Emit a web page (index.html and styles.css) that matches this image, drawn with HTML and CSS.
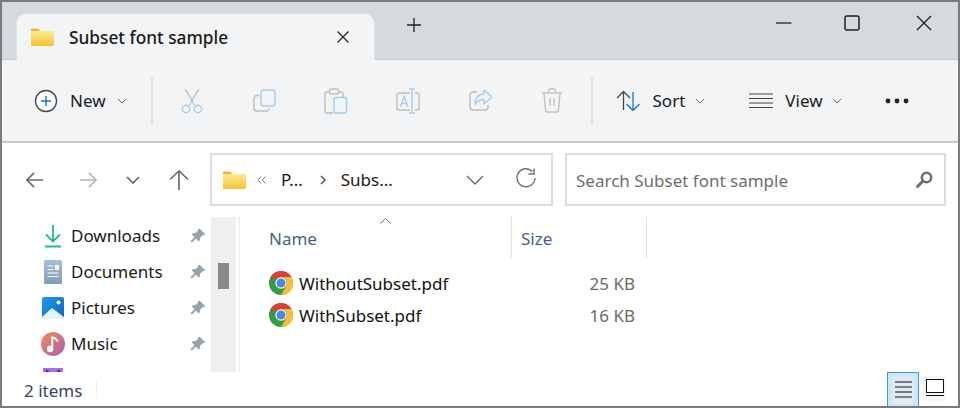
FILE: index.html
```html
<!DOCTYPE html>
<html lang="en">
<head>
    <meta charset="UTF-8">
    <title>Subset font sample</title>
    <link rel="stylesheet" href="styles.css">
</head>
<body>
    <svg class="defs" width="0" height="0">
        <defs>
            <linearGradient id="folder-grad" x1="0" y1="0" x2="0" y2="1">
                <stop offset="0" stop-color="#ffe991"/>
                <stop offset="1" stop-color="#f6c234"/>
            </linearGradient>
            <linearGradient id="doc-grad" x1="0" y1="0" x2="0" y2="1">
                <stop offset="0" stop-color="#a9bdd6"/>
                <stop offset="1" stop-color="#7f9cbd"/>
            </linearGradient>
            <linearGradient id="pic-grad" x1="0" y1="0" x2="1" y2="1">
                <stop offset="0" stop-color="#1f9bec"/>
                <stop offset="1" stop-color="#0a64c4"/>
            </linearGradient>
            <linearGradient id="music-grad" x1="0" y1="0" x2="1" y2="1">
                <stop offset="0" stop-color="#f0904e"/>
                <stop offset="1" stop-color="#a85fb4"/>
            </linearGradient>
            <symbol id="folder" viewBox="0 0 24 18">
                <path d="M1 1.5a1 1 0 0 1 1-1h6l2.5 2.5H1z" fill="#f2b52a"/>
                <rect x="1" y="3" width="23" height="15" rx="1" fill="url(#folder-grad)"/>
            </symbol>
            <symbol id="pin" viewBox="0 0 16 16">
                <path d="M9.7.8l5.5 5.5-1.4 1-1-.3-2.7 2.7-.3 2.9-1 1-2.9-2.9L2 14.4.9 14l-.2-.9 3.8-3.9L1.7 6.3l1-1 2.9-.3 2.7-2.7-.3-1z" fill="#98a2ab"/>
            </symbol>
            <symbol id="chrome" viewBox="0 0 24 24">
                <circle cx="12" cy="12" r="12" fill="#2f9e44"/>
                <path d="M12 0a12 12 0 0 1 10.4 6H12a6 6 0 0 0-5.2 3L1.6 6A12 12 0 0 1 12 0z" fill="#dc3e31"/>
                <path d="M22.4 6A12 12 0 0 1 12 24l5.2-9A6 6 0 0 0 12 6z" fill="#fbc02d"/>
                <circle cx="12" cy="12" r="5.7" fill="#fff"/>
                <circle cx="12" cy="12" r="4.5" fill="#4a86e8"/>
            </symbol>
            <symbol id="chev" viewBox="0 0 10 6">
                <path d="M.8.8L5 5l4.2-4.2" fill="none" stroke="#6a6a6a" stroke-width="1"/>
            </symbol>
        </defs>
    </svg>

    <div class="window">
        <div class="titlebar">
            <div class="tab">
                <svg class="tab-folder" width="24" height="18"><use href="#folder"/></svg>
                <span class="tab-title">Subset font sample</span>
                <svg class="tab-close" width="14" height="14" viewBox="0 0 14 14"><path d="M1.5 1.5l11 11M12.5 1.5l-11 11" stroke="#222" stroke-width="1.2"/></svg>
            </div>
            <svg class="tab-add" width="16" height="16" viewBox="0 0 16 16"><path d="M8 1v14M1 8h14" stroke="#222" stroke-width="1.3"/></svg>
            <div class="win-controls">
                <svg width="16" height="16" viewBox="0 0 16 16"><path d="M0 8h15.5" stroke="#222" stroke-width="1.3"/></svg>
                <svg width="16" height="16" viewBox="0 0 16 16"><rect x="1" y="1" width="14" height="14" rx="2" fill="none" stroke="#222" stroke-width="1.5"/></svg>
                <svg width="16" height="16" viewBox="0 0 16 16"><path d="M1 1l14 14M15 1L1 15" stroke="#222" stroke-width="1.4"/></svg>
            </div>
        </div>

        <div class="toolbar">
            <div class="tool tool-new">
                <svg width="24" height="24" viewBox="0 0 24 24"><circle cx="12" cy="12" r="10.5" fill="#fff" stroke="#444" stroke-width="1.3"/><path d="M12 7v10M7 12h10" stroke="#0a78d4" stroke-width="1.4"/></svg>
                <span>New</span>
                <svg class="chev" width="10" height="6"><use href="#chev"/></svg>
            </div>
            <div class="tool-sep tool-sep-first"></div>
            <div class="icon-tools">
                <div class="icon-tool">
                    <svg width="24" height="26" viewBox="0 0 24 26">
                        <path d="M5 1l8.5 13.5M19 1L10.500 14.500" stroke="#bcbcbc" stroke-width="1.3" fill="none"/>
                        <path d="M9 18l2-3M15 18l-2-3" stroke="#a9cfee" stroke-width="1.3"/>
                        <circle cx="6" cy="21" r="3.700" fill="none" stroke="#a3cdf0" stroke-width="1.400"/>
                        <circle cx="18" cy="21" r="3.700" fill="none" stroke="#a3cdf0" stroke-width="1.400"/>
                    </svg>
                </div>
                <div class="icon-tool">
                    <svg width="24" height="24" viewBox="-1 -1 24 24">
                        <path d="M6 6.500H4a3 3 0 0 0-3 3V19a3 3 0 0 0 3 3h9a3 3 0 0 0 3-2.500" fill="none" stroke="#bdbdbd" stroke-width="1.400"/>
                        <rect x="8" y="1" width="14" height="16" rx="3" fill="#f3f4f6" stroke="#a3cdf0" stroke-width="1.400"/>
                    </svg>
                </div>
                <div class="icon-tool">
                    <svg width="24" height="26" viewBox="0 0 24 26">
                        <path d="M5 4H3a2 2 0 0 0-2 2v17a2 2 0 0 0 2 2h6M15 4h2a2 2 0 0 1 2 2v3" fill="none" stroke="#bdbdbd" stroke-width="1.400"/>
                        <rect x="5.500" y="1" width="9" height="5" rx="1.500" fill="none" stroke="#bdbdbd" stroke-width="1.400"/>
                        <rect x="10" y="9.500" width="12.500" height="15.500" rx="2" fill="#f3f4f6" stroke="#a3cdf0" stroke-width="1.400"/>
                    </svg>
                </div>
                <div class="icon-tool">
                    <svg width="24" height="26" viewBox="0 0 24 26">
                        <path d="M14 5H3a2 2 0 0 0-2 2v13a2 2 0 0 0 2 2h11M19 5h2a2 2 0 0 1 2 2v13a2 2 0 0 1-2 2h-2" fill="none" stroke="#bdbdbd" stroke-width="1.400"/>
                        <path d="M13 1h6M13 25h6M16 1v24" fill="none" stroke="#a3cdf0" stroke-width="1.400"/>
                        <path d="M4.500 19l3.700-10.500L12 19M5.800 15.500h4.800" fill="none" stroke="#a3cdf0" stroke-width="1.300"/>
                    </svg>
                </div>
                <div class="icon-tool">
                    <svg width="24" height="24" viewBox="-1 0 24 24">
                        <path d="M8 4H4a3 3 0 0 0-3 3v12a3 3 0 0 0 3 3h12a3 3 0 0 0 3-3v-2" fill="none" stroke="#bdbdbd" stroke-width="1.400"/>
                        <path d="M15 2l8 7-8 7v-4.500c-4 0-7 1-9 5 0-6 3-10 9-10.500z" fill="#f3f4f6" stroke="#a3cdf0" stroke-width="1.400" stroke-linejoin="round"/>
                    </svg>
                </div>
                <div class="icon-tool">
                    <svg width="22" height="25" viewBox="0 0 22 25">
                        <path d="M1 5h20M7.500 5V3a2 2 0 0 1 2-2h3a2 2 0 0 1 2 2v2M3 5l1.500 17a2 2 0 0 0 2 2h9a2 2 0 0 0 2-2L19 5M9 10v8M13 10v8" fill="none" stroke="#c2c2c2" stroke-width="1.400"/>
                    </svg>
                </div>
            </div>
            <div class="tool-sep"></div>
            <div class="tool tool-sort">
                <svg width="24" height="20" viewBox="0 0 24 20"><path d="M1 7l6.500-6.500L14 7M7.500 1v18" fill="none" stroke="#444" stroke-width="1.300"/><path d="M10.500 13l6.500 6.500 6.500-6.500M17 1v18" fill="none" stroke="#0a78d4" stroke-width="1.300"/></svg>
                <span>Sort</span>
                <svg class="chev" width="10" height="6"><use href="#chev"/></svg>
            </div>
            <div class="tool tool-view">
                <svg width="24" height="16" viewBox="0 0 24 16"><path d="M0 1h24M0 5.500h24M0 10h24M0 14.500h24" stroke="#444" stroke-width="1.200"/></svg>
                <span>View</span>
                <svg class="chev" width="10" height="6"><use href="#chev"/></svg>
            </div>
            <svg class="tool-more" width="24" height="6" viewBox="0 0 24 6"><circle cx="3" cy="3" r="2.400" fill="#222"/><circle cx="12" cy="3" r="2.400" fill="#222"/><circle cx="21" cy="3" r="2.400" fill="#222"/></svg>
        </div>

        <div class="addressrow">
            <div class="nav">
                <svg class="nav-back" width="18" height="16" viewBox="0 0 20 18"><path d="M9 1L1 9l8 8M1 9h18" fill="none" stroke="#6e6e6e" stroke-width="1.800"/></svg>
                <svg class="nav-forward" width="18" height="16" viewBox="0 0 20 18"><path d="M11 1l8 8-8 8M19 9H1" fill="none" stroke="#b4b4b4" stroke-width="1.800"/></svg>
                <svg class="nav-down" width="14" height="8" viewBox="0 0 14 8"><path d="M1 1l6 6 6-6" fill="none" stroke="#666" stroke-width="1.700"/></svg>
                <svg class="nav-up" width="20" height="20" viewBox="0 0 20 20"><path d="M1 9.500L10 1l9 8.500M10 1v19" fill="none" stroke="#6e6e6e" stroke-width="1.700"/></svg>
            </div>
            <div class="address">
                <svg width="24" height="18"><use href="#folder"/></svg>
                <svg class="crumb-back" width="9" height="8" viewBox="0 0 9 8"><path d="M4 .5L.8 4 4 7.500M8.500.5L5.300 4l3.200 3.500" fill="none" stroke="#777" stroke-width="1"/></svg>
                <span class="crumb-parent">P...</span>
                <svg class="crumb-sep" width="6" height="10" viewBox="0 0 6 10"><path d="M1 1l4 4-4 4" fill="none" stroke="#555" stroke-width="1.500"/></svg>
                <span class="crumb-current">Subs...</span>
                <svg class="address-drop" width="18" height="10" viewBox="0 0 18 10"><path d="M1 1l8 8 8-8" fill="none" stroke="#666" stroke-width="1.300"/></svg>
                <svg class="address-refresh" width="20" height="20" viewBox="0 0 20 20"><path d="M16.500 3.500A9 9 0 1 0 19 10" fill="none" stroke="#6e6e6e" stroke-width="1.400"/><path d="M18 .5v5.500h-5.500" fill="none" stroke="#6e6e6e" stroke-width="1.400"/></svg>
            </div>
            <div class="search">
                <span>Search Subset font sample</span>
                <svg width="17" height="17" viewBox="0 0 17 17"><circle cx="10.500" cy="6.500" r="4.700" fill="none" stroke="#6e6e6e" stroke-width="2.400"/><path d="M7 10l-5.500 5.500" stroke="#6e6e6e" stroke-width="3" stroke-linecap="round"/></svg>
            </div>
        </div>

        <div class="main">
            <div class="sidebar">
                <div class="side-item">
                    <svg width="24" height="24" viewBox="0 0 24 24"><path d="M12 1v16M5 10.500l7 7 7-7" fill="none" stroke="#1db98f" stroke-width="1.800"/><path d="M4 22.500h16" stroke="#1db98f" stroke-width="2"/></svg>
                    <span>Downloads</span>
                    <svg class="pin" width="16" height="16"><use href="#pin"/></svg>
                </div>
                <div class="side-item">
                    <svg width="24" height="24" viewBox="0 0 24 24"><rect x="3" y="0" width="18" height="24" rx="1.500" fill="url(#doc-grad)"/><path d="M6.500 6h6M6.500 9.500h6M6.500 13h11M6.500 16.500h11" stroke="#fff" stroke-width="1.200"/><rect x="14" y="5" width="4" height="5" fill="#fff"/></svg>
                    <span>Documents</span>
                    <svg class="pin" width="16" height="16"><use href="#pin"/></svg>
                </div>
                <div class="side-item">
                    <svg width="24" height="24" viewBox="0 0 24 24"><rect x="1" y="1" width="22" height="22" rx="2" fill="url(#pic-grad)"/><path d="M1 21l10-9 12 9v.5a1.500 1.500 0 0 1-1.500 1.500h-19A1.500 1.500 0 0 1 1 21.500z" fill="#e6f1fa"/><circle cx="17.500" cy="6.500" r="2" fill="#fff"/></svg>
                    <span>Pictures</span>
                    <svg class="pin" width="16" height="16"><use href="#pin"/></svg>
                </div>
                <div class="side-item">
                    <svg width="24" height="24" viewBox="0 0 24 24"><circle cx="12" cy="12" r="12" fill="url(#music-grad)"/><circle cx="9" cy="17" r="3.200" fill="#fff"/><path d="M11.200 17V5.500c2 .3 4.500 1.500 5.300 4" fill="none" stroke="#fff" stroke-width="2"/></svg>
                    <span>Music</span>
                    <svg class="pin" width="16" height="16"><use href="#pin"/></svg>
                </div>
                <div class="side-item">
                    <svg width="24" height="24" viewBox="0 1 24 24"><rect x="2" y="0" width="20" height="20" rx="2" fill="#a66be8"/><path d="M5 3h2.500v2.500H5zM16.500 3H19v2.500h-2.500z" fill="#4a2c86"/></svg>
                    <span></span>
                    <svg class="pin" width="16" height="16"><use href="#pin"/></svg>
                </div>
            </div>
            <div class="scrolltrack"><div class="scrollthumb"></div></div>
            <div class="listing">
                <div class="list-head">
                    <svg class="sort-arrow" width="11" height="6" viewBox="0 0 11 6"><path d="M.5 5.500l5-5 5 5" fill="none" stroke="#777" stroke-width="1"/></svg>
                    <div class="col col-name">Name</div>
                    <div class="col col-size">Size</div>
                </div>
                <div class="file-row">
                    <svg width="24" height="24"><use href="#chrome"/></svg>
                    <span class="file-name">WithoutSubset.pdf</span>
                    <span class="file-size">25 KB</span>
                </div>
                <div class="file-row">
                    <svg width="24" height="24"><use href="#chrome"/></svg>
                    <span class="file-name">WithSubset.pdf</span>
                    <span class="file-size">16 KB</span>
                </div>
            </div>
        </div>

        <div class="statusbar">
            <span class="item-count">2 items</span>
            <div class="view-btn view-details">
                <div class="view-inner">
                    <svg width="17" height="17" viewBox="0 0 17 17"><path d="M0 1h17M0 6h17M0 11h17M0 16h17" stroke="#111" stroke-width="1.100"/></svg>
                </div>
            </div>
            <div class="view-btn view-large">
                <svg width="18" height="18" viewBox="0 0 18 18"><rect x=".5" y=".5" width="17" height="13" fill="#fff" stroke="#111"/><path d="M0 16.500h18" stroke="#111"/></svg>
            </div>
        </div>
    </div>
</body>
</html>
```

FILE: styles.css
```css
* {
    margin: 0;
    padding: 0;
    box-sizing: border-box;
}

body {
    font-family: "Noto Sans", sans-serif;
    font-size: 17px;
    color: #1a1a1a;
    background: #fff;
}

svg {
    display: block;
    flex: none;
}

.defs {
    position: absolute;
}

.window {
    width: 960px;
    height: 408px;
    border: 2px solid #7b7b7b;
    display: flex;
    flex-direction: column;
    overflow: hidden;
}

/* title bar */
.titlebar {
    height: 58px;
    flex: none;
    background: #d6dadd;
    border-bottom: 1px solid #c9cccf;
    display: flex;
    align-items: flex-start;
}

.tab {
    width: 359px;
    height: 47px;
    margin: 11px 0 0 14px;
    padding: 0 24px 0 13px;
    background: #f3f4f6;
    border: 1px solid #dfe2e4;
    border-bottom: none;
    border-radius: 10px 10px 0 0;
    display: flex;
    align-items: center;
}

.tab-title {
    margin-left: 15px;
    font-weight: 500;
    font-size: 17.3px;
}

.tab-close {
    margin-left: auto;
}

.tab-add {
    margin: 15px 0 0 31px;
}

.win-controls {
    margin: 13px 0 0 auto;
    display: flex;
    gap: 56px;
    padding-right: 26px;
}

.win-controls svg:first-child {
    margin-right: -4px;
}

/* command bar */
.toolbar {
    height: 83px;
    flex: none;
    background: #f3f4f6;
    border-bottom: 2px solid #c8c9ca;
    display: flex;
    align-items: center;
    padding-left: 32px;
}

.tool {
    display: flex;
    align-items: center;
}

.tool-new span {
    margin: 0 11px 0 12px;
}

.tool-sep {
    width: 2px;
    height: 47px;
    background: #e2e3e5;
}

.tool-sep-first {
    margin-left: 24px;
}

.icon-tools {
    display: flex;
    margin: 0 3px;
}

.icon-tool {
    width: 72px;
    display: flex;
    justify-content: center;
}

.tool-sort {
    margin-left: 23px;
}

.tool-sort span {
    margin: 0 10px 0 13px;
}

.tool-view {
    margin-left: 44px;
}

.tool-view span {
    margin: 0 9px 0 12px;
}

.tool-more {
    margin-left: 43px;
}

/* address row */
.addressrow {
    height: 74px;
    flex: none;
    padding-top: 10px;
    display: flex;
    align-items: flex-start;
}

.nav {
    width: 208px;
    height: 53px;
    display: flex;
    align-items: center;
    padding-left: 24px;
}

.nav-forward {
    margin-left: 35px;
}

.nav-down {
    margin-left: 29px;
}

.nav-up {
    margin-left: 29px;
}

.address,
.search {
    height: 53px;
    border: 2px solid #dcdcdc;
    display: flex;
    align-items: center;
}

.address {
    width: 343px;
    padding-left: 10px;
}

.crumb-back {
    margin-left: 11px;
}

.crumb-parent {
    margin-left: 15px;
}

.crumb-sep {
    margin-left: 17px;
}

.crumb-current {
    margin-left: 15px;
}

.address-drop {
    margin-left: auto;
}

.address-refresh {
    margin: -4px 15px 0 32px;
}

.search {
    width: 381px;
    margin-left: 12px;
    padding: 0 11px 0 9px;
    justify-content: space-between;
    color: #6e6e6e;
}

.search span {
    margin-top: 2px;
}

/* nav pane and file list */
.main {
    height: 155px;
    flex: none;
    display: flex;
    overflow: hidden;
}

.sidebar {
    width: 209px;
    flex: none;
    padding-top: 1px;
}

.side-item {
    height: 36px;
    display: flex;
    align-items: center;
    padding: 0 5px 0 39px;
}

.side-item span {
    margin: -2px 0 0 6px;
}

.pin {
    margin-left: auto;
}

.scrolltrack {
    width: 25px;
    flex: none;
    background: #efefef;
    padding: 46px 7px 0 7px;
}

.scrollthumb {
    width: 11px;
    height: 26px;
    background: #8a8a8a;
}

.listing {
    flex: 1;
    margin-left: 2px;
    border-left: 2px solid #f0f0f0;
    position: relative;
}

.list-head {
    display: flex;
    height: 41px;
}

.sort-arrow {
    position: absolute;
    left: 140px;
    top: 1px;
}

.col {
    padding-top: 10px;
    border-right: 1px solid #e3e3e3;
    color: #4c607a;
}

.col-name {
    width: 272px;
    padding-left: 29px;
}

.col-size {
    width: 135px;
    padding-left: 9px;
}

.file-row {
    height: 32px;
    display: flex;
    align-items: center;
    padding-left: 29px;
    width: 395px;
}

.list-head + .file-row {
    margin-top: 9px;
}

.file-name {
    margin-left: 6px;
    color: #111;
}

.file-size {
    margin-left: auto;
    color: #6a6a6a;
}

/* status bar */
.statusbar {
    flex: 1;
    display: flex;
    align-items: center;
    padding-left: 22px;
}

.item-count {
    color: #36465a;
    padding: 4px 14px 0 0;
    border-right: 1px solid #f0f0f0;
    line-height: 14px;
}

.view-btn {
    display: flex;
    align-items: center;
    justify-content: center;
}

.view-details {
    margin-left: auto;
    width: 32px;
    height: 34px;
    background: #cce8f6;
    border: 1px solid #3c9ad0;
    border-bottom: none;
    padding: 4px;
}

.view-inner {
    width: 24px;
    height: 28px;
    background: #dfeaf2;
    border-radius: 3px;
    display: flex;
    align-items: center;
    justify-content: center;
}

.view-large {
    width: 23px;
    height: 25px;
    margin: 0 12px 2px 4px;
    background: #f5f5f5;
    border-radius: 3px;
}
```
